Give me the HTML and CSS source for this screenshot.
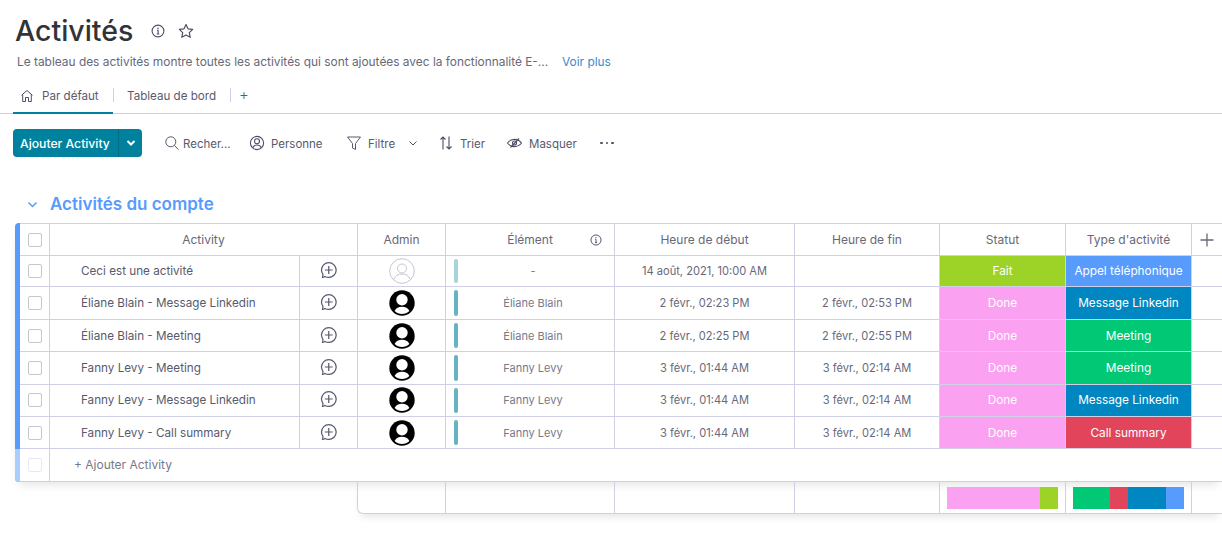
FILE: index.html
```html
<!DOCTYPE html>
<html lang="fr">
<head>
    <meta charset="UTF-8">
    <title>Activités</title>
    <link rel="stylesheet" href="styles.css">
</head>
<body>

    <svg class="defs" width="0" height="0">
        <symbol id="bubble" viewBox="0 0 16 16">
            <path d="M2.2 14.600c.9-.1 1.600-.5 2.200-.9 1 .6 2.100.9 3.400.9 3.600 0 6.600-2.900 6.600-6.500S11.400 1.500 7.800 1.500 1.300 4.400 1.300 8c0 1.500.5 2.800 1.300 3.900.1.900-.1 1.900-.4 2.700z" fill="none" stroke="#585a6e" stroke-width="1.100" stroke-linejoin="round"/>
            <path d="M7.800 4.500v7M4.300 8h7" stroke="#585a6e" stroke-width="1.100" fill="none"/>
        </symbol>
        <symbol id="avatar" viewBox="0 0 26 26">
            <circle cx="13" cy="13" r="12.700" fill="#000"/>
            <circle cx="13" cy="9.800" r="5.700" fill="#fff"/>
            <path d="M5.600 21c1.400-3 4-4.300 7.400-4.300s6 1.300 7.400 4.300c-2 1.900-4.500 2.900-7.400 2.900s-5.400-1-7.400-2.900z" fill="#fff"/>
        </symbol>
        <symbol id="info" viewBox="0 0 14 14">
            <circle cx="7" cy="7" r="5.900" fill="none" stroke="#4b4e69" stroke-width="1.100"/>
            <path d="M6 6.300h1.100v3.600M5.800 10h2.500" fill="none" stroke="#4b4e69" stroke-width="1.100"/>
            <circle cx="7" cy="4.200" r=".8" fill="#4b4e69"/>
        </symbol>
    </svg>

    <header class="page-head">
        <div class="title-row">
            <h1>Activités</h1>
            <svg class="title-icon" width="14" height="14"><use href="#info"/></svg>
            <svg class="title-icon star" width="16" height="16" viewBox="0 0 16 16">
                <path d="M8 1.500l2 4.300 4.700.6-3.400 3.200.9 4.700L8 12l-4.200 2.300.9-4.700L1.300 6.400 6 5.800z" fill="none" stroke="#4b4e69" stroke-width="1.200" stroke-linejoin="round"/>
            </svg>
        </div>
        <p class="description">
            <span>Le tableau des activités montre toutes les activités qui sont ajoutées avec la fonctionnalité E-...</span>
            <a class="more" href="#">Voir plus</a>
        </p>
    </header>

    <nav class="tabs">
        <div class="tab active">
            <svg width="14" height="14" viewBox="0 0 14 14">
                <path d="M1.500 6.300L7 1.500l5.500 4.800M2.700 5.500v7h2.800V8.500h3v4h2.800v-7" fill="none" stroke="#4b4e69" stroke-width="1" stroke-linejoin="round"/>
            </svg>
            <span>Par défaut</span>
        </div>
        <div class="tab second">Tableau de bord</div>
        <div class="tab-add">+</div>
    </nav>

    <div class="toolbar">
        <div class="add-btn">
            <span class="add-label">Ajouter Activity</span>
            <span class="add-arrow">
                <svg width="10" height="10" viewBox="0 0 10 10"><path d="M1.500 3l3.500 3.500L8.500 3" fill="none" stroke="#fff" stroke-width="2"/></svg>
            </span>
        </div>
        <div class="tool tool-search">
            <svg width="16" height="16" viewBox="0 0 16 16"><circle cx="6.800" cy="6.800" r="5" fill="none" stroke="#585a6e" stroke-width="1"/><path d="M10.500 10.500l4 4.200" stroke="#585a6e" stroke-width="1"/></svg>
            <span>Recher...</span>
        </div>
        <div class="tool tool-person">
            <svg width="16" height="16" viewBox="0 0 16 16"><circle cx="8" cy="8" r="6.600" fill="none" stroke="#4b4e69" stroke-width="1.100"/><circle cx="8" cy="6.300" r="2.500" fill="none" stroke="#4b4e69" stroke-width="1.100"/><path d="M3.700 12.800c.8-1.900 2.400-2.800 4.300-2.800s3.500.9 4.300 2.800" fill="none" stroke="#4b4e69" stroke-width="1.100"/></svg>
            <span>Personne</span>
        </div>
        <div class="tool tool-filter">
            <svg width="16" height="16" viewBox="0 0 16 16"><path d="M1.500 2h13L9.500 8.500v6l-3-1.500V8.500z" fill="none" stroke="#585a6e" stroke-width="1" stroke-linejoin="round"/></svg>
            <span>Filtre</span>
            <svg class="filter-arrow" width="10" height="10" viewBox="0 0 10 10"><path d="M1.500 3.500L5 7l3.500-3.500" fill="none" stroke="#4b4e69" stroke-width="1"/></svg>
        </div>
        <div class="tool tool-sort">
            <svg width="16" height="16" viewBox="0 0 16 16"><path d="M5 14.500V2M2.500 4.500L5 2l2.500 2.500M11 1.500V14M8.500 11.500L11 14l2.500-2.500" fill="none" stroke="#4b4e69" stroke-width="1.100"/></svg>
            <span>Trier</span>
        </div>
        <div class="tool tool-hide">
            <svg width="17" height="16" viewBox="0 0 17 16"><path d="M1.500 8c1.800-2.400 4-3.600 7-3.600s5.200 1.200 7 3.600c-1.800 2.400-4 3.600-7 3.600s-5.200-1.200-7-3.600z" fill="none" stroke="#4b4e69" stroke-width="1.100"/><circle cx="8.500" cy="8" r="2" fill="none" stroke="#4b4e69" stroke-width="1.100"/><path d="M4.500 12.500L13 3.500" stroke="#4b4e69" stroke-width="1.100"/></svg>
            <span>Masquer</span>
        </div>
        <div class="tool-dots"><i></i><i></i><i></i></div>
    </div>

    <div class="group-title">
        <svg width="11" height="11" viewBox="0 0 11 11"><path d="M1.500 3.500l4 4 4-4" fill="none" stroke="#579bfc" stroke-width="1.500"/></svg>
        <span>Activités du compte</span>
    </div>

    <section class="board">
        <div class="row head">
            <div class="cell check"><b class="box"></b></div>
            <div class="cell name-head">Activity</div>
            <div class="cell">Admin</div>
            <div class="cell element-head">Élément<svg width="12" height="12"><use href="#info"/></svg></div>
            <div class="cell">Heure de début</div>
            <div class="cell">Heure de fin</div>
            <div class="cell">Statut</div>
            <div class="cell">Type d'activité</div>
            <div class="cell plus">
                <svg width="14" height="14" viewBox="0 0 14 14"><path d="M7 .5v13M.5 7h13" stroke="#676879" stroke-width="1.300"/></svg>
            </div>
        </div>

        <div class="row first">
            <div class="cell check"><b class="box"></b></div>
            <div class="cell name">Ceci est une activité</div>
            <div class="cell update"><svg width="18" height="18"><use href="#bubble"/></svg></div>
            <div class="cell">
                <svg width="26" height="26" viewBox="0 0 26 26"><circle cx="13" cy="13" r="12.300" fill="none" stroke="#c5c7d0" stroke-width="1"/><circle cx="13" cy="10.500" r="4.500" fill="none" stroke="#c5c7d0" stroke-width="1"/><path d="M5 21.500c1-3.800 4-5.500 8-5.500s7 1.700 8 5.500" fill="none" stroke="#c5c7d0" stroke-width="1"/></svg>
            </div>
            <div class="cell element"><i class="tag faded"></i><span>-</span></div>
            <div class="cell date">14 août, 2021, 10:00 AM</div>
            <div class="cell"></div>
            <div class="cell fill lime">Fait</div>
            <div class="cell fill blue">Appel téléphonique</div>
            <div class="cell"></div>
        </div>

        <div class="row">
            <div class="cell check"><b class="box"></b></div>
            <div class="cell name">Éliane Blain - Message Linkedin</div>
            <div class="cell update"><svg width="18" height="18"><use href="#bubble"/></svg></div>
            <div class="cell"><svg width="26" height="26"><use href="#avatar"/></svg></div>
            <div class="cell element"><i class="tag"></i><span>Éliane Blain</span></div>
            <div class="cell date">2 févr., 02:23 PM</div>
            <div class="cell date">2 févr., 02:53 PM</div>
            <div class="cell fill pink">Done</div>
            <div class="cell fill navy">Message Linkedin</div>
            <div class="cell"></div>
        </div>

        <div class="row">
            <div class="cell check"><b class="box"></b></div>
            <div class="cell name">Éliane Blain - Meeting</div>
            <div class="cell update"><svg width="18" height="18"><use href="#bubble"/></svg></div>
            <div class="cell"><svg width="26" height="26"><use href="#avatar"/></svg></div>
            <div class="cell element"><i class="tag"></i><span>Éliane Blain</span></div>
            <div class="cell date">2 févr., 02:25 PM</div>
            <div class="cell date">2 févr., 02:55 PM</div>
            <div class="cell fill pink">Done</div>
            <div class="cell fill green">Meeting</div>
            <div class="cell"></div>
        </div>

        <div class="row">
            <div class="cell check"><b class="box"></b></div>
            <div class="cell name">Fanny Levy - Meeting</div>
            <div class="cell update"><svg width="18" height="18"><use href="#bubble"/></svg></div>
            <div class="cell"><svg width="26" height="26"><use href="#avatar"/></svg></div>
            <div class="cell element"><i class="tag"></i><span>Fanny Levy</span></div>
            <div class="cell date">3 févr., 01:44 AM</div>
            <div class="cell date">3 févr., 02:14 AM</div>
            <div class="cell fill pink">Done</div>
            <div class="cell fill green">Meeting</div>
            <div class="cell"></div>
        </div>

        <div class="row">
            <div class="cell check"><b class="box"></b></div>
            <div class="cell name">Fanny Levy - Message Linkedin</div>
            <div class="cell update"><svg width="18" height="18"><use href="#bubble"/></svg></div>
            <div class="cell"><svg width="26" height="26"><use href="#avatar"/></svg></div>
            <div class="cell element"><i class="tag"></i><span>Fanny Levy</span></div>
            <div class="cell date">3 févr., 01:44 AM</div>
            <div class="cell date">3 févr., 02:14 AM</div>
            <div class="cell fill pink">Done</div>
            <div class="cell fill navy">Message Linkedin</div>
            <div class="cell"></div>
        </div>

        <div class="row">
            <div class="cell check"><b class="box"></b></div>
            <div class="cell name">Fanny Levy - Call summary</div>
            <div class="cell update"><svg width="18" height="18"><use href="#bubble"/></svg></div>
            <div class="cell"><svg width="26" height="26"><use href="#avatar"/></svg></div>
            <div class="cell element"><i class="tag"></i><span>Fanny Levy</span></div>
            <div class="cell date">3 févr., 01:44 AM</div>
            <div class="cell date">3 févr., 02:14 AM</div>
            <div class="cell fill pink">Done</div>
            <div class="cell fill red">Call summary</div>
            <div class="cell"></div>
        </div>

        <div class="add-row">
            <div class="cell check"><b class="box soft"></b></div>
            <div class="add-text">+ Ajouter Activity</div>
        </div>
    </section>

    <div class="summary">
        <div class="cell"></div>
        <div class="cell"></div>
        <div class="cell"></div>
        <div class="cell"></div>
        <div class="cell bar-cell">
            <div class="bar">
                <i class="pink" style="width: 83.500%"></i>
                <i class="lime" style="width: 16.500%"></i>
            </div>
        </div>
        <div class="cell bar-cell">
            <div class="bar">
                <i class="green" style="width: 33.500%"></i>
                <i class="red" style="width: 16.500%"></i>
                <i class="navy" style="width: 33.500%"></i>
                <i class="blue" style="width: 16.500%"></i>
            </div>
        </div>
        <div class="cell"></div>
    </div>

</body>
</html>
```

FILE: styles.css
```css
/* Reset and base styles */
* {
    margin: 0;
    padding: 0;
    box-sizing: border-box;
}

html, body {
    height: 543px;
    overflow: hidden;
}

body {
    width: 1222px;
    background: #fff;
    color: #585a6e;
    font-family: 'Inter', 'Noto Sans', sans-serif;
    font-size: 12px;
}

.defs {
    position: absolute;
}

/* Page header */
.page-head {
    padding: 12px 0 0 15px;
}

.title-row {
    display: flex;
    align-items: center;
    height: 38px;
}

.title-row h1 {
    font-size: 28.500px;
    font-weight: 500;
    line-height: 38px;
    color: #323338;
    width: 136px;
}

.title-icon {
    margin-right: 13px;
}

.description {
    display: flex;
    margin-top: 3px;
    padding-left: 2px;
    height: 18px;
    line-height: 18px;
    font-size: 11.900px;
    color: #676879;
}

.description span {
    width: 545px;
    white-space: nowrap;
}

.more {
    color: #3a8ad0;
    text-decoration: none;
}

/* Tabs */
.tabs {
    display: flex;
    align-items: center;
    margin-top: 10px;
    height: 33px;
    padding: 0 0 2px 13px;
    border-bottom: 1px solid #cfd0e6;
    font-size: 11.600px;
    color: #585a6e;
    position: relative;
}

.tab {
    display: flex;
    align-items: center;
    height: 31px;
}

.tab.active {
    width: 100px;
    padding-left: 7px;
    gap: 8px;
    box-shadow: 0 2px 0 #00829e;
}

.tab.second {
    position: relative;
    margin-left: 14px;
    width: 104px;
}

.tab.active::after,
.tab.second::after {
    content: '';
    position: absolute;
    top: 7px;
    height: 14px;
    width: 1px;
    background: #cfd0e6;
}

.tab.active::after {
    left: 113px;
}

.tab.second::after {
    right: 0;
}

.tab-add {
    margin: 0 0 3px 8px;
    font-size: 15px;
    font-weight: 300;
}

/* Toolbar */
.toolbar {
    display: flex;
    align-items: center;
    height: 28px;
    margin: 15px 0 0 13px;
    font-size: 11.500px;
}

.add-btn {
    display: flex;
    width: 129px;
    height: 28px;
    background: #00829e;
    border-radius: 4px;
    color: #fff;
    font-size: 12.200px;
    font-weight: 500;
    line-height: 29px;
    margin-right: 22px;
}

.add-label {
    width: 105px;
    padding-left: 7px;
    white-space: nowrap;
}

.add-arrow {
    flex: 1;
    display: flex;
    align-items: center;
    justify-content: center;
    border-left: 1px solid #026b83;
}

.tool {
    display: flex;
    align-items: center;
    gap: 6px;
    white-space: nowrap;
}

.tool span {
    margin-top: 2px;
}

.tool-search { width: 85px; gap: 3px; }
.tool-person { width: 97px; }
.tool-filter { width: 92px; }
.tool-sort { width: 68px; }
.tool-hide { width: 94px; }

.filter-arrow {
    margin-left: 7px;
}

.tool-dots {
    display: flex;
    gap: 3px;
}

.tool-dots i {
    width: 2.500px;
    height: 2.500px;
    border-radius: 50%;
    background: #4b4e69;
}

/* Group */
.group-title {
    display: flex;
    align-items: center;
    gap: 12px;
    margin: 37px 0 0 27px;
    height: 20px;
    color: #579bfc;
    font-size: 17px;
    font-weight: 600;
}

.board {
    margin: 9px 0 0 15px;
    width: 1207px;
    border-left: 5px solid #579bfc;
    border-radius: 4px 0 0 4px;
    box-shadow: 0 6px 10px -4px rgba(0, 0, 0, 0.12);
}

.row {
    display: grid;
    grid-template-columns: 30px 250px 58px 88px 169px 180px 145px 126px 126px 30px;
    height: 32.330px;
    border-bottom: 1px solid #cfd0e6;
}

.row.head {
    grid-template-columns: 30px 308px 88px 169px 180px 145px 126px 126px 30px;
    height: 33px;
    border-top: 1px solid #cfd0e6;
    color: #676879;
}

.row.first {
    height: 31px;
}

.row.first + .row {
    height: 33px;
}

.cell {
    display: flex;
    align-items: center;
    justify-content: center;
    border-right: 1px solid #cfd0e6;
    min-width: 0;
    white-space: nowrap;
}

.cell:last-child {
    border-right: 0;
}

.box {
    display: block;
    width: 14px;
    height: 14px;
    border: 1px solid #c5c7d0;
    border-radius: 2px;
}

.box.soft {
    border-color: #e6e9ef;
}

.cell.name {
    justify-content: flex-start;
    padding-left: 31px;
    font-size: 11.700px;
    color: #585a6e;
}

.update svg {
    margin: 0 0 2px 1px;
}

.date {
    font-size: 11.100px;
    color: #676879;
}

.element-head {
    position: relative;
}

.element-head svg {
    position: absolute;
    right: 12px;
    top: 10px;
}

.element {
    position: relative;
    padding-left: 6px;
    color: #77798a;
    font-size: 11px;
}

.tag {
    position: absolute;
    left: 8px;
    top: 3px;
    bottom: 3px;
    width: 4px;
    border-radius: 2px;
    background: #66b3c2;
}

.tag.faded {
    background: #a6d4dc;
}

.fill {
    color: #fff;
    font-size: 11.800px;
    border-right-color: #cfd0e6;
}

.pink { background: #faa1f1; }
.lime { background: #9cd326; }
.blue { background: #579bfc; }
.navy { background: #0086c0; }
.green { background: #00c875; }
.red { background: #e2445c; }

.add-row {
    display: grid;
    grid-template-columns: 30px 1fr;
    height: 33px;
    border-bottom: 1px solid #cfd0e6;
    border-left: 5px solid #a9cdfd;
    margin-left: -5px;
    border-radius: 0 0 0 4px;
    color: #77798a;
}

.add-text {
    padding-left: 24px;
    line-height: 32px;
}

/* Summary strip */
.summary {
    display: grid;
    grid-template-columns: 88px 169px 180px 145px 126px 126px 30px;
    margin-left: 357px;
    width: 865px;
    height: 32px;
    border-left: 1px solid #cfd0e6;
    border-bottom: 1px solid #cfd0e6;
    border-radius: 0 0 0 6px;
    box-shadow: 0 6px 10px -4px rgba(0, 0, 0, 0.12);
}

.bar-cell {
    padding: 0 7px;
}

.bar {
    display: flex;
    width: 100%;
    height: 22px;
}

.bar i {
    display: block;
}
```
